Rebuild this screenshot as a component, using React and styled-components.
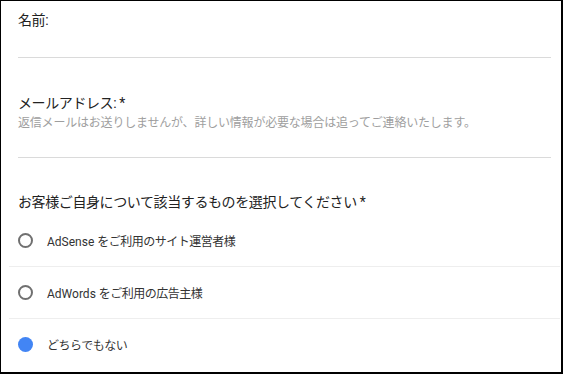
import React, { useState } from 'react';
import styled, { createGlobalStyle } from 'styled-components';

const Global = createGlobalStyle`
  body {
    margin: 0;
    background: #fff;
  }
`;

const options = [
    { brand: 'AdSense ', rest: 'をご利用のサイト運営者様' },
    { brand: 'AdWords ', rest: 'をご利用の広告主様' },
    { brand: '', rest: 'どちらでもない' }
];

const App = () => {
    const [picked, setPicked] = useState(2);
    return (
        <>
            <Global/>
            <Frame>
                <Inner>
                    <Section>
                        <Label>名前:</Label>
                    </Section>
                    <EmailSection>
                        <Label>メールアドレス: *</Label>
                        <Help>返信メールはお送りしませんが、詳しい情報が必要な場合は追ってご連絡いたします。</Help>
                    </EmailSection>
                    <Question>お客様ご自身について該当するものを選択してください *</Question>
                    <List>
                        {options.map((o, i) => (
                            <Row key={i} onClick={() => setPicked(i)}>
                                <Radio checked={picked === i}/>
                                <RowText>
                                    {o.brand && <Brand>{o.brand}</Brand>}
                                    {o.rest}
                                </RowText>
                            </Row>
                        ))}
                    </List>
                </Inner>
            </Frame>
        </>
    );
};

export default App;

const Frame = styled.div`
width: 563px;
height: 374px;
box-sizing: border-box;
border-style: solid;
border-color: #000;
border-width: 1px 2px 2px 1px;
overflow: hidden;
font-family: Roboto, "Noto Sans CJK JP", sans-serif;
color: #222;
`;
const Inner = styled.div`
padding: 0 10px 0 17px;
`;
const Section = styled.div`
height: 57px;
padding-top: 9px;
box-sizing: border-box;
border-bottom: 1px solid #dadada;
`;
const EmailSection = styled.div`
padding: 35px 0 26px;
border-bottom: 1px solid #dadada;
`;
const Label = styled.div`
font-size: 14px;
line-height: 20px;
letter-spacing: -0.4px;
`;
const Help = styled.div`
margin-top: 2px;
font-size: 12px;
line-height: 16px;
letter-spacing: -0.2px;
color: #9e9e9e;
`;
const Question = styled.div`
margin-top: 34px;
font-size: 14px;
line-height: 20px;
letter-spacing: -0.4px;
`;
const List = styled.div`
margin: 3px -9px 0 -9px;
`;
const Row = styled.div`
display: flex;
align-items: center;
height: 51px;
padding: 0 9px;
border-bottom: 1px solid #eeeeee;
cursor: pointer;
&:last-child{
border-bottom: none;
}
`;
const Radio = styled.span`
width: 15px;
height: 15px;
box-sizing: border-box;
border-radius: 50%;
flex: none;
border: ${p => p.checked ? 'none' : '2px solid #707070'};
background: ${p => p.checked ? '#4285f4' : 'transparent'};
`;
const RowText = styled.span`
margin-left: 14px;
font-size: 12px;
letter-spacing: -0.5px;
color: #333;
white-space: pre;
`;
const Brand = styled.span`
letter-spacing: 0;
`;
